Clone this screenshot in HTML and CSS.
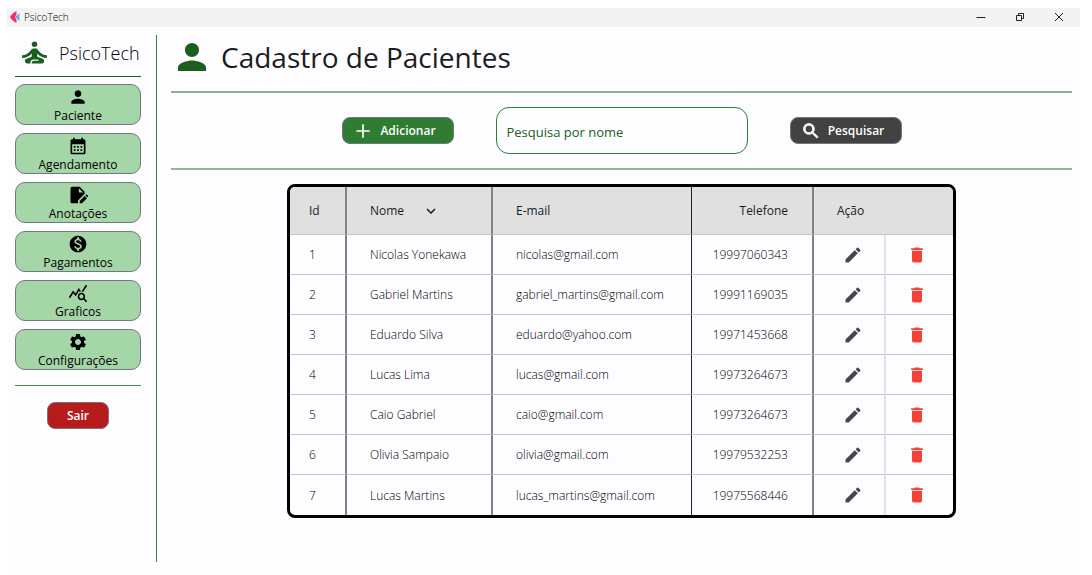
FILE: index.html
```html
<!DOCTYPE html>
<html lang="pt-BR">

<head>
    <meta charset="UTF-8">
    <meta name="viewport" content="width=device-width, initial-scale=1.0">
    <link rel="stylesheet" href="styles.css">
    <title>PsicoTech</title>
</head>

<body>

    <!-- shared icons -->
    <svg class="sprite" aria-hidden="true">
        <symbol id="person" viewBox="0 0 24 24">
            <path d="M12 12c2.21 0 4-1.79 4-4s-1.79-4-4-4-4 1.79-4 4 1.79 4 4 4zm0 2c-2.67 0-8 1.34-8 4v2h16v-2c0-2.66-5.33-4-8-4z"/>
        </symbol>
        <symbol id="edit" viewBox="0 0 24 24">
            <path d="M3 17.25V21h3.75L17.81 9.94l-3.75-3.75L3 17.25zM20.71 7.04a1 1 0 0 0 0-1.41l-2.34-2.34a1 1 0 0 0-1.41 0l-1.83 1.83 3.75 3.75 1.83-1.83z"/>
        </symbol>
        <symbol id="delete" viewBox="0 0 24 24">
            <path d="M6 19c0 1.1.9 2 2 2h8c1.1 0 2-.9 2-2V7H6v12zM19 4h-3.5l-1-1h-5l-1 1H5v2h14V4z"/>
        </symbol>
    </svg>

    <div class="window">
        <header class="titlebar">
            <svg class="app-icon" viewBox="0 0 10 14">
                <path fill="#5fb4e8" d="M9.5 3v8L5 7z"/>
                <path fill="#ee2f68" d="M6.5 1v3.5L4.800 7l1.700 2.500V13C4.500 12 1 9.500 0 7 1 4.500 4.500 2 6.500 1z"/>
            </svg>
            <span class="app-name">PsicoTech</span>
            <div class="window-buttons">
                <button aria-label="Minimizar"><svg viewBox="0 0 10 10"><path d="M0.5 5.5h9"/></svg></button>
                <button aria-label="Restaurar"><svg viewBox="0 0 10 10"><path d="M1.5 3.5h5v5h-5zM3.500 3V1.500h5v5H7"/></svg></button>
                <button aria-label="Fechar"><svg viewBox="0 0 10 10"><path d="M1 1l8 8M9 1l-8 8"/></svg></button>
            </div>
        </header>

        <div class="content">
            <aside class="sidebar">
                <div class="brand">
                    <svg viewBox="0 0 24 24">
                        <circle cx="12" cy="6" r="2"/>
                        <path d="M21 16v-2c-2.240 0-4.160-.96-5.600-2.680l-1.340-1.600A1.980 1.980 0 0 0 12.530 9h-1.050c-.59 0-1.150.26-1.530.72l-1.340 1.600C7.160 13.040 5.240 14 3 14v2c2.770 0 5.190-1.170 7-3.250V15l-3.880 1.550c-.67.27-1.120.93-1.120 1.660C5 19.200 5.800 20 6.790 20H9v-.5a2.500 2.500 0 0 1 2.500-2.500h3c.28 0 .5.22.5.5s-.22.5-.5.5h-3c-.83 0-1.500.67-1.500 1.500v.5h7.100c.85 0 1.650-.54 1.860-1.360.22-.86-.25-1.730-1.080-2.060L14 15v-2.250c1.810 2.080 4.230 3.250 7 3.250z"/>
                    </svg>
                    <span>PsicoTech</span>
                </div>
                <nav class="menu">
                    <button>
                        <svg><use href="#person"/></svg>
                        Paciente
                    </button>
                    <button>
                        <svg viewBox="0 0 24 24"><path d="M19 4h-1V2h-2v2H8V2H6v2H5c-1.110 0-1.990.9-1.990 2L3 20a2 2 0 0 0 2 2h14c1.100 0 2-.9 2-2V6c0-1.100-.9-2-2-2zm0 16H5V10h14v10zM9 14H7v-2h2v2zm4 0h-2v-2h2v2zm4 0h-2v-2h2v2zm-8 4H7v-2h2v2zm4 0h-2v-2h2v2zm4 0h-2v-2h2v2z"/></svg>
                        Agendamento
                    </button>
                    <button>
                        <svg viewBox="0 0 24 24"><path d="M5 2h9l6 6v2.500L12 18.500V22H5c-1.100 0-2-.9-2-2V4c0-1.100.9-2 2-2zm8 7h5l-5-5z"/><path d="M14 22v-2.800l6-6 2.800 2.800-6 6zM20.800 12.400l.7-.7c.4-.4.9-.4 1.300 0l1 1c.4.4.4.9 0 1.300l-.6.700z"/></svg>
                        Anotações
                    </button>
                    <button>
                        <svg viewBox="0 0 24 24"><path d="M12 2C6.480 2 2 6.480 2 12s4.480 10 10 10 10-4.480 10-10S17.520 2 12 2zm1.410 16.090V20h-2.670v-1.930c-1.710-.36-3.160-1.460-3.270-3.400h1.960c.1 1.050.82 1.870 2.650 1.870 1.960 0 2.400-.98 2.400-1.590 0-.83-.44-1.610-2.670-2.140-2.480-.6-4.180-1.620-4.180-3.670 0-1.720 1.390-2.840 3.110-3.210V4h2.670v1.950c1.860.45 2.790 1.860 2.850 3.390H14.300c-.05-1.110-.64-1.870-2.220-1.870-1.500 0-2.400.68-2.400 1.640 0 .84.65 1.390 2.670 1.910s4.180 1.390 4.180 3.910c-.01 1.830-1.380 2.830-3.120 3.160z"/></svg>
                        Pagamentos
                    </button>
                    <button>
                        <svg viewBox="0 0 24 24"><path d="M19.880 18.470c.44-.7.7-1.510.7-2.390 0-2.490-2.010-4.500-4.500-4.500s-4.500 2.010-4.500 4.500 2.010 4.500 4.490 4.500c.88 0 1.700-.26 2.390-.7L21.580 23 23 21.580l-3.120-3.110zm-3.800.11c-1.380 0-2.500-1.120-2.500-2.500s1.120-2.500 2.500-2.500 2.500 1.120 2.500 2.500-1.120 2.500-2.500 2.500zm-.36-8.500c-.74.02-1.450.18-2.100.45l-.55-.83-3.800 6.180-3.010-3.520-3.630 5.810L1 17l5-8 3 3.500L13 6l2.720 4.080zm2.590.5c-.64-.28-1.330-.45-2.050-.49L21.380 2 23 3.180l-4.690 7.400z"/></svg>
                        Graficos
                    </button>
                    <button>
                        <svg viewBox="0 0 24 24"><path d="M19.140 12.940c.04-.3.06-.61.06-.94 0-.32-.02-.64-.07-.94l2.030-1.580c.18-.14.23-.41.12-.61l-1.920-3.320c-.12-.22-.37-.29-.59-.22l-2.390.96c-.5-.38-1.030-.7-1.620-.94l-.36-2.540c-.04-.24-.24-.41-.48-.41h-3.840c-.24 0-.43.17-.47.41l-.36 2.540c-.59.24-1.130.57-1.620.94l-2.390-.96c-.22-.08-.47 0-.59.22L2.740 8.870c-.12.21-.08.47.12.61l2.030 1.580c-.05.3-.09.63-.09.94s.02.64.07.94l-2.030 1.580c-.18.14-.23.41-.12.61l1.920 3.320c.12.22.37.29.59.22l2.390-.96c.5.38 1.030.7 1.620.94l.36 2.540c.05.24.24.41.48.41h3.840c.24 0 .44-.17.47-.41l.36-2.540c.59-.24 1.130-.56 1.620-.94l2.390.96c.22.08.47 0 .59-.22l1.920-3.320c.12-.22.07-.47-.12-.61l-2.010-1.580zM12 15.600c-1.980 0-3.600-1.620-3.600-3.600s1.620-3.600 3.600-3.600 3.600 1.620 3.600 3.600-1.620 3.600-3.600 3.600z"/></svg>
                        Configurações
                    </button>
                </nav>
                <button class="btn btn-exit">Sair</button>
            </aside>

            <main class="main">
                <div class="page-title">
                    <svg><use href="#person"/></svg>
                    <h1>Cadastro de Pacientes</h1>
                </div>

                <div class="toolbar">
                    <button class="btn btn-add">
                        <svg viewBox="0 0 24 24"><path d="M20 13h-7v7h-2v-7H4v-2h7V4h2v7h7v2z"/></svg>
                        Adicionar
                    </button>
                    <input type="text" class="search" placeholder="Pesquisa por nome" aria-label="Pesquisa por nome">
                    <button class="btn btn-search">
                        <svg viewBox="0 0 24 24" stroke="currentColor"><path d="M15.500 14h-.79l-.28-.27A6.470 6.470 0 0 0 16 9.500 6.500 6.500 0 1 0 9.500 16c1.610 0 3.090-.59 4.230-1.570l.27.28v.79l5 4.990L20.490 19l-4.990-5zm-6 0C7.010 14 5 11.990 5 9.500S7.010 5 9.500 5 14 7.010 14 9.500 11.990 14 9.500 14z"/></svg>
                        Pesquisar
                    </button>
                </div>

                <div class="table-box">
                    <table>
                        <colgroup>
                            <col class="col-id">
                            <col class="col-name">
                            <col class="col-email">
                            <col class="col-phone">
                            <col class="col-edit">
                            <col class="col-delete">
                        </colgroup>
                        <thead>
                            <tr>
                                <th>Id</th>
                                <th>
                                    <span class="sortable">Nome
                                        <svg viewBox="0 0 24 24"><path d="M16.590 8.590L12 13.170 7.410 8.590 6 10l6 6 6-6z"/></svg>
                                    </span>
                                </th>
                                <th>E-mail</th>
                                <th class="phone">Telefone</th>
                                <th colspan="2">Ação</th>
                            </tr>
                        </thead>
                        <tbody>
                            <tr>
                                <td>1</td>
                                <td>Nicolas Yonekawa</td>
                                <td>nicolas@gmail.com</td>
                                <td class="phone">19997060343</td>
                                <td class="action"><button class="edit" aria-label="Editar"><svg><use href="#edit"/></svg></button></td>
                                <td class="action"><button class="delete" aria-label="Excluir"><svg><use href="#delete"/></svg></button></td>
                            </tr>
                            <tr>
                                <td>2</td>
                                <td>Gabriel Martins</td>
                                <td>gabriel_martins@gmail.com</td>
                                <td class="phone">19991169035</td>
                                <td class="action"><button class="edit" aria-label="Editar"><svg><use href="#edit"/></svg></button></td>
                                <td class="action"><button class="delete" aria-label="Excluir"><svg><use href="#delete"/></svg></button></td>
                            </tr>
                            <tr>
                                <td>3</td>
                                <td>Eduardo Silva</td>
                                <td>eduardo@yahoo.com</td>
                                <td class="phone">19971453668</td>
                                <td class="action"><button class="edit" aria-label="Editar"><svg><use href="#edit"/></svg></button></td>
                                <td class="action"><button class="delete" aria-label="Excluir"><svg><use href="#delete"/></svg></button></td>
                            </tr>
                            <tr>
                                <td>4</td>
                                <td>Lucas Lima</td>
                                <td>lucas@gmail.com</td>
                                <td class="phone">19973264673</td>
                                <td class="action"><button class="edit" aria-label="Editar"><svg><use href="#edit"/></svg></button></td>
                                <td class="action"><button class="delete" aria-label="Excluir"><svg><use href="#delete"/></svg></button></td>
                            </tr>
                            <tr>
                                <td>5</td>
                                <td>Caio Gabriel</td>
                                <td>caio@gmail.com</td>
                                <td class="phone">19973264673</td>
                                <td class="action"><button class="edit" aria-label="Editar"><svg><use href="#edit"/></svg></button></td>
                                <td class="action"><button class="delete" aria-label="Excluir"><svg><use href="#delete"/></svg></button></td>
                            </tr>
                            <tr>
                                <td>6</td>
                                <td>Olivia Sampaio</td>
                                <td>olivia@gmail.com</td>
                                <td class="phone">19979532253</td>
                                <td class="action"><button class="edit" aria-label="Editar"><svg><use href="#edit"/></svg></button></td>
                                <td class="action"><button class="delete" aria-label="Excluir"><svg><use href="#delete"/></svg></button></td>
                            </tr>
                            <tr>
                                <td>7</td>
                                <td>Lucas Martins</td>
                                <td>lucas_martins@gmail.com</td>
                                <td class="phone">19975568446</td>
                                <td class="action"><button class="edit" aria-label="Editar"><svg><use href="#edit"/></svg></button></td>
                                <td class="action"><button class="delete" aria-label="Excluir"><svg><use href="#delete"/></svg></button></td>
                            </tr>
                        </tbody>
                    </table>
                </div>
            </main>
        </div>
    </div>

</body>

</html>
```

FILE: styles.css
```css
* {
    box-sizing: border-box;
}

body {
    margin: 0;
    padding: 8px 12px 5px 7px;
    height: 100vh;
    background-color: #fff;
    color: #1a1c1e;
    font-family: "Open Sans", "Noto Sans", sans-serif;
    font-size: 12px;
}

button,
input {
    font-family: inherit;
    font-size: 12px;
}

button {
    padding: 0;
    cursor: pointer;
}

svg {
    display: block;
    flex-shrink: 0;
    fill: currentColor;
}

.sprite {
    display: none;
}

.window {
    display: flex;
    flex-direction: column;
    min-height: 100%;
    background-color: #fdfdff;
}

/* title bar */

.titlebar {
    display: flex;
    align-items: center;
    height: 19px;
    padding: 0 2px 2px 3px;
    background-color: #f3f3f3;
}

.app-icon {
    width: 10px;
    height: 14px;
}

.app-name {
    margin-left: 4px;
    font-size: 10px;
    font-weight: 300;
    color: #000;
}

.window-buttons {
    display: flex;
    margin-left: auto;
}

.window-buttons button {
    display: flex;
    align-items: center;
    justify-content: center;
    width: 39px;
    height: 17px;
    border: none;
    background: none;
}

.window-buttons svg {
    width: 10px;
    height: 10px;
    fill: none;
    stroke: #222;
}

.content {
    display: flex;
    flex: 1;
    padding: 8px;
}

/* sidebar */

.sidebar {
    display: flex;
    flex-direction: column;
    align-items: center;
    width: 142px;
    padding-right: 15px;
    border-right: 1px solid #3f7f44;
}

.brand {
    display: flex;
    align-items: center;
    gap: 8px;
    width: 100%;
    height: 42px;
    padding: 0 0 6px 3px;
    border-bottom: 1px solid #1b5e20;
    color: #000;
    font-size: 18px;
    font-weight: 300;
}

.brand svg {
    width: 33px;
    height: 33px;
    color: #1b5e20;
}

.menu {
    display: flex;
    flex-direction: column;
    gap: 8px;
    width: 100%;
    padding: 7px 0 15px;
    border-bottom: 1px solid #4f8a54;
}

.menu button {
    display: flex;
    flex-direction: column;
    align-items: center;
    height: 41px;
    padding-top: 2px;
    border: 1px solid #72787e;
    border-radius: 10px;
    background-color: #a5d6a7;
    color: #000;
    font-weight: 500;
    line-height: 18px;
}

.menu svg {
    width: 20px;
    height: 20px;
}

.btn {
    display: flex;
    align-items: center;
    justify-content: center;
    gap: 7px;
    height: 27px;
    border: 1px solid #72787e;
    border-radius: 8px;
    color: #fff;
    font-weight: 600;
}

.btn svg {
    width: 20px;
    height: 20px;
}

.btn-exit {
    width: 62px;
    margin-top: 16px;
    background-color: #b71c1c;
}

/* main area */

.main {
    flex: 1;
    padding-left: 14px;
}

.page-title {
    display: flex;
    align-items: center;
    gap: 8px;
    height: 58px;
    padding-bottom: 13px;
    border-bottom: 2px solid #8db091;
}

.page-title svg {
    width: 42px;
    height: 42px;
    color: #1b5e20;
}

h1 {
    margin: 0;
    font-size: 28px;
    font-weight: 400;
}

.toolbar {
    display: flex;
    align-items: center;
    justify-content: center;
    gap: 42px;
    padding: 14px 0;
    border-bottom: 2px solid #94b598;
}

.btn-add,
.btn-search {
    width: 112px;
    padding-right: 6px;
}

.btn-add {
    background-color: #2e7d32;
}

.btn-search {
    background-color: #424242;
}

.search {
    width: 252px;
    height: 47px;
    padding: 2px 10px 0;
    border: 1px solid #2e7d32;
    border-radius: 13px;
    background-color: transparent;
    font-size: 13px;
}

.search::placeholder {
    color: #1b5e20;
    opacity: 1;
}

/* patients table */

.table-box {
    width: fit-content;
    margin: 14px auto 0;
    border: 3px solid #000;
    border-radius: 8px;
    overflow: hidden;
}

table {
    table-layout: fixed;
    width: 663px;
    border-collapse: separate;
    border-spacing: 0;
}

.col-id {
    width: 57px;
}

.col-name {
    width: 146px;
}

.col-email {
    width: 199px;
}

.col-phone {
    width: 122px;
}

.col-edit {
    width: 72px;
}

.col-delete {
    width: 67px;
}

th,
td {
    padding: 0 0 0 23px;
    border-right: 2px solid #808285;
    border-bottom: 1px solid #c2c7ce;
    text-align: left;
}

th:first-child,
td:first-child {
    padding-left: 19px;
}

th:nth-child(3),
td:nth-child(3) {
    border-right: 1px solid #222;
}

th {
    height: 48px;
    background-color: #e0e0e0;
    font-weight: 500;
}

td {
    height: 40px;
    color: #000;
    font-weight: 300;
}

th:last-child,
td:last-child {
    border-right: none;
}

tr:last-child td {
    border-bottom: none;
}

th.phone,
td.phone {
    padding: 0 24px 0 0;
    text-align: right;
}

.sortable {
    display: flex;
    align-items: center;
    gap: 18px;
}

.sortable svg {
    width: 18px;
    height: 18px;
}

td.action {
    padding: 0 0 0 8px;
    border-right-color: #dfe2e8;
}

td.action:last-child {
    padding: 0 4px 0 0;
}

.action button {
    display: block;
    margin: 0 auto;
    border: none;
    background: none;
}

.action svg {
    width: 20px;
    height: 20px;
}

.edit {
    color: #42474e;
}

.delete {
    color: #f44336;
}
```
